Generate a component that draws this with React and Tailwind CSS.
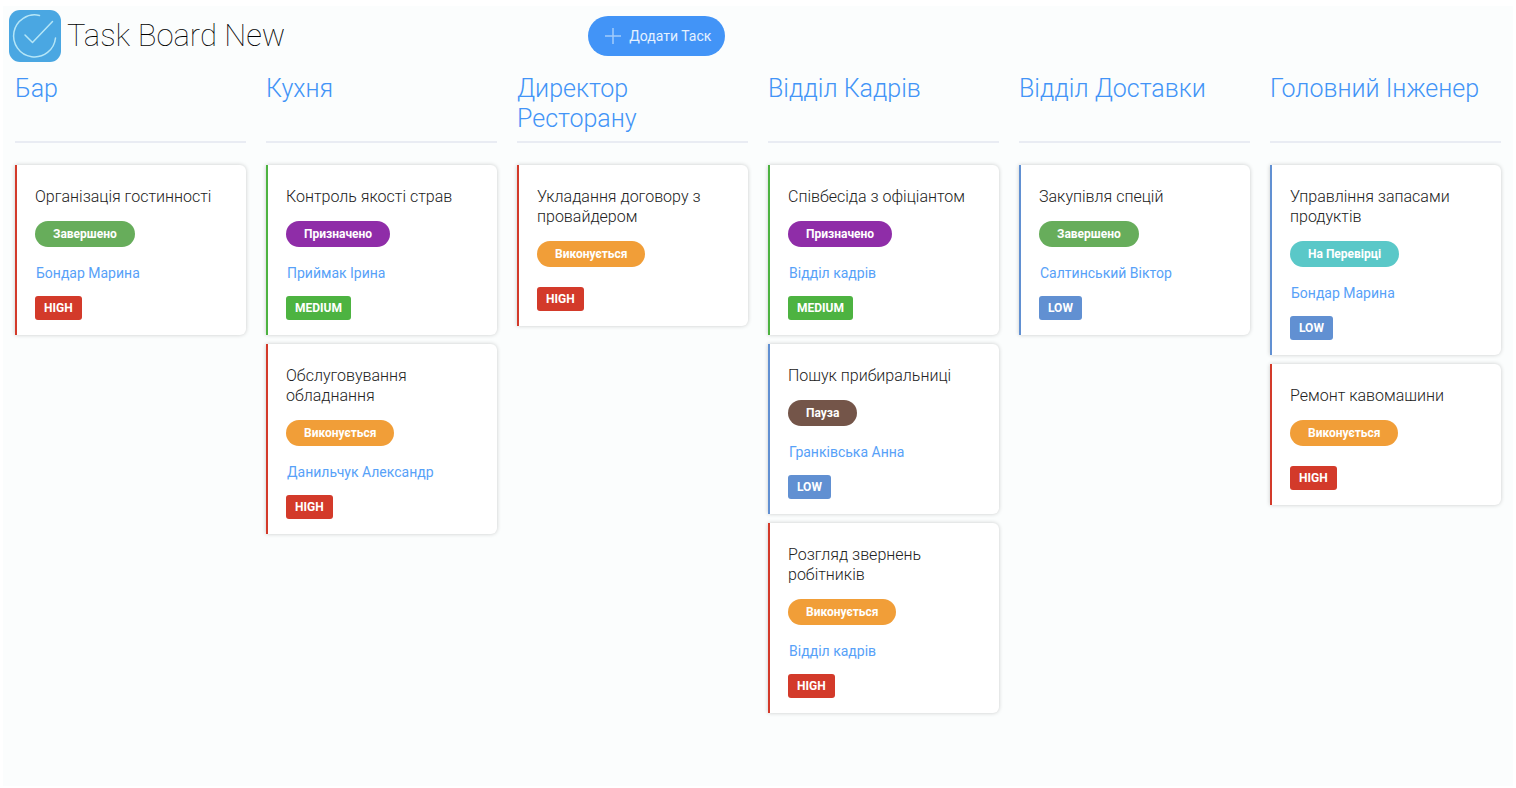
const columns = [
  {
    name: "Бар",
    tasks: [
      { title: "Організація гостинності", status: "done", assignee: "Бондар Марина", priority: "high" },
    ],
  },
  {
    name: "Кухня",
    tasks: [
      { title: "Контроль якості страв", status: "assigned", assignee: "Приймак Ірина", priority: "medium" },
      { title: "Обслуговування обладнання", status: "progress", assignee: "Данильчук Александр", priority: "high" },
    ],
  },
  {
    name: "Директор Ресторану",
    tasks: [
      { title: "Укладання договору з провайдером", status: "progress", priority: "high" },
    ],
  },
  {
    name: "Відділ Кадрів",
    tasks: [
      { title: "Співбесіда з офіціантом", status: "assigned", assignee: "Відділ кадрів", priority: "medium" },
      { title: "Пошук прибиральниці", status: "paused", assignee: "Гранківська Анна", priority: "low" },
      { title: "Розгляд звернень робітників", status: "progress", assignee: "Відділ кадрів", priority: "high" },
    ],
  },
  {
    name: "Відділ Доставки",
    tasks: [
      { title: "Закупівля спецій", status: "done", assignee: "Салтинський Віктор", priority: "low" },
    ],
  },
  {
    name: "Головний Інженер",
    tasks: [
      { title: "Управління запасами продуктів", status: "review", assignee: "Бондар Марина", priority: "low" },
      { title: "Ремонт кавомашини", status: "progress", priority: "high" },
    ],
  },
];

const statuses = {
  done: { label: "Завершено", className: "bg-[#67ad5b]" },
  assigned: { label: "Призначено", className: "bg-[#8f2da8]" },
  progress: { label: "Виконується", className: "bg-[#f19e38]" },
  paused: { label: "Пауза", className: "bg-[#745549]" },
  review: { label: "На Перевірці", className: "bg-[#5ac8c8]" },
};

const priorities = {
  high: { label: "HIGH", badge: "bg-[#d33a2a]", border: "border-[#d33a2a]" },
  medium: { label: "MEDIUM", badge: "bg-[#4db341]", border: "border-[#4db341]" },
  low: { label: "LOW", badge: "bg-[#6190d2]", border: "border-[#6190d2]" },
};

function Logo() {
  return (
    <svg width="52" height="52" viewBox="0 0 52 52" fill="none" className="shrink-0">
      <rect width="52" height="52" rx="11" fill="#4aa7e2" />
      <g stroke="#b5e6f7" strokeWidth="1.5" strokeLinecap="round" strokeLinejoin="round">
        <path d="M30.500 5.500A21 21 0 1 0 46.500 28" />
        <path d="M16 25l7.500 7.500 20-21" />
      </g>
    </svg>
  );
}

function Header() {
  return (
    <header className="grid grid-cols-[29fr_46fr] items-center px-[6px] pt-1">
      {/* LEFT */}
      <div className="flex items-center gap-[6px]">
        <Logo />
        <h1 className="text-[31px] leading-[40px] font-thin text-black">Task Board New</h1>
      </div>

      {/* ADD TASK */}
      <button
        type="button"
        className="flex h-10 items-center gap-[7px] justify-self-start rounded-full bg-[#4294f7] pr-[14px] pl-4 text-[14px] text-[#e4f1ff]"
      >
        <svg width="18" height="18" viewBox="0 0 18 18" stroke="#a3cbfb" strokeWidth="1.500">
          <path d="M9 1v16M1 9h16" />
        </svg>
        Додати Таск
      </button>
    </header>
  );
}

function TaskCard({ task }) {
  const status = statuses[task.status];
  const priority = priorities[task.priority];

  return (
    <article
      className={`flex flex-col items-start rounded-r-[6px] border-l-2 bg-white pt-[22px] pr-4 pb-[15px] pl-[18px] shadow-[0_0_4px_rgba(0,0,0,0.2)] ${priority.border}`}
    >
      <h3 className="text-[16px] leading-[20px] font-light text-[#222222]">{task.title}</h3>
      <span
        className={`mt-[14px] flex h-[26px] items-center rounded-full px-[18px] text-[12px] font-bold text-white ${status.className}`}
      >
        {status.label}
      </span>
      {task.assignee && (
        <a href="#" className="mt-4 -mb-[7px] px-px text-[14px] leading-[20px] text-[#57a1f8]">
          {task.assignee}
        </a>
      )}
      <span
        className={`mt-5 flex h-6 items-center rounded-[3px] px-[9px] text-[12px] font-bold text-white ${priority.badge}`}
      >
        {priority.label}
      </span>
    </article>
  );
}

function Column({ column }) {
  return (
    <section className="min-w-0">
      <div className="h-[71px] border-b-2 border-[#e9ecf3] pt-0.5">
        <h2 className="text-[25px] leading-[30px] font-light text-[#4294f7]">{column.name}</h2>
      </div>
      <div className="mt-[22px] flex flex-col gap-[9px]">
        {column.tasks.map((task) => (
          <TaskCard key={task.title} task={task} />
        ))}
      </div>
    </section>
  );
}

export default function App() {
  return (
    <div className="flex min-h-screen flex-col bg-white px-[3px] pt-[6px] pb-[2px] font-['Roboto',sans-serif]">
      <div className="grow bg-[#fbfdfd]">
        <Header />
        <main className="mt-[10px] grid grid-cols-6 gap-5 px-3">
          {columns.map((column) => (
            <Column key={column.name} column={column} />
          ))}
        </main>
      </div>
    </div>
  );
}
